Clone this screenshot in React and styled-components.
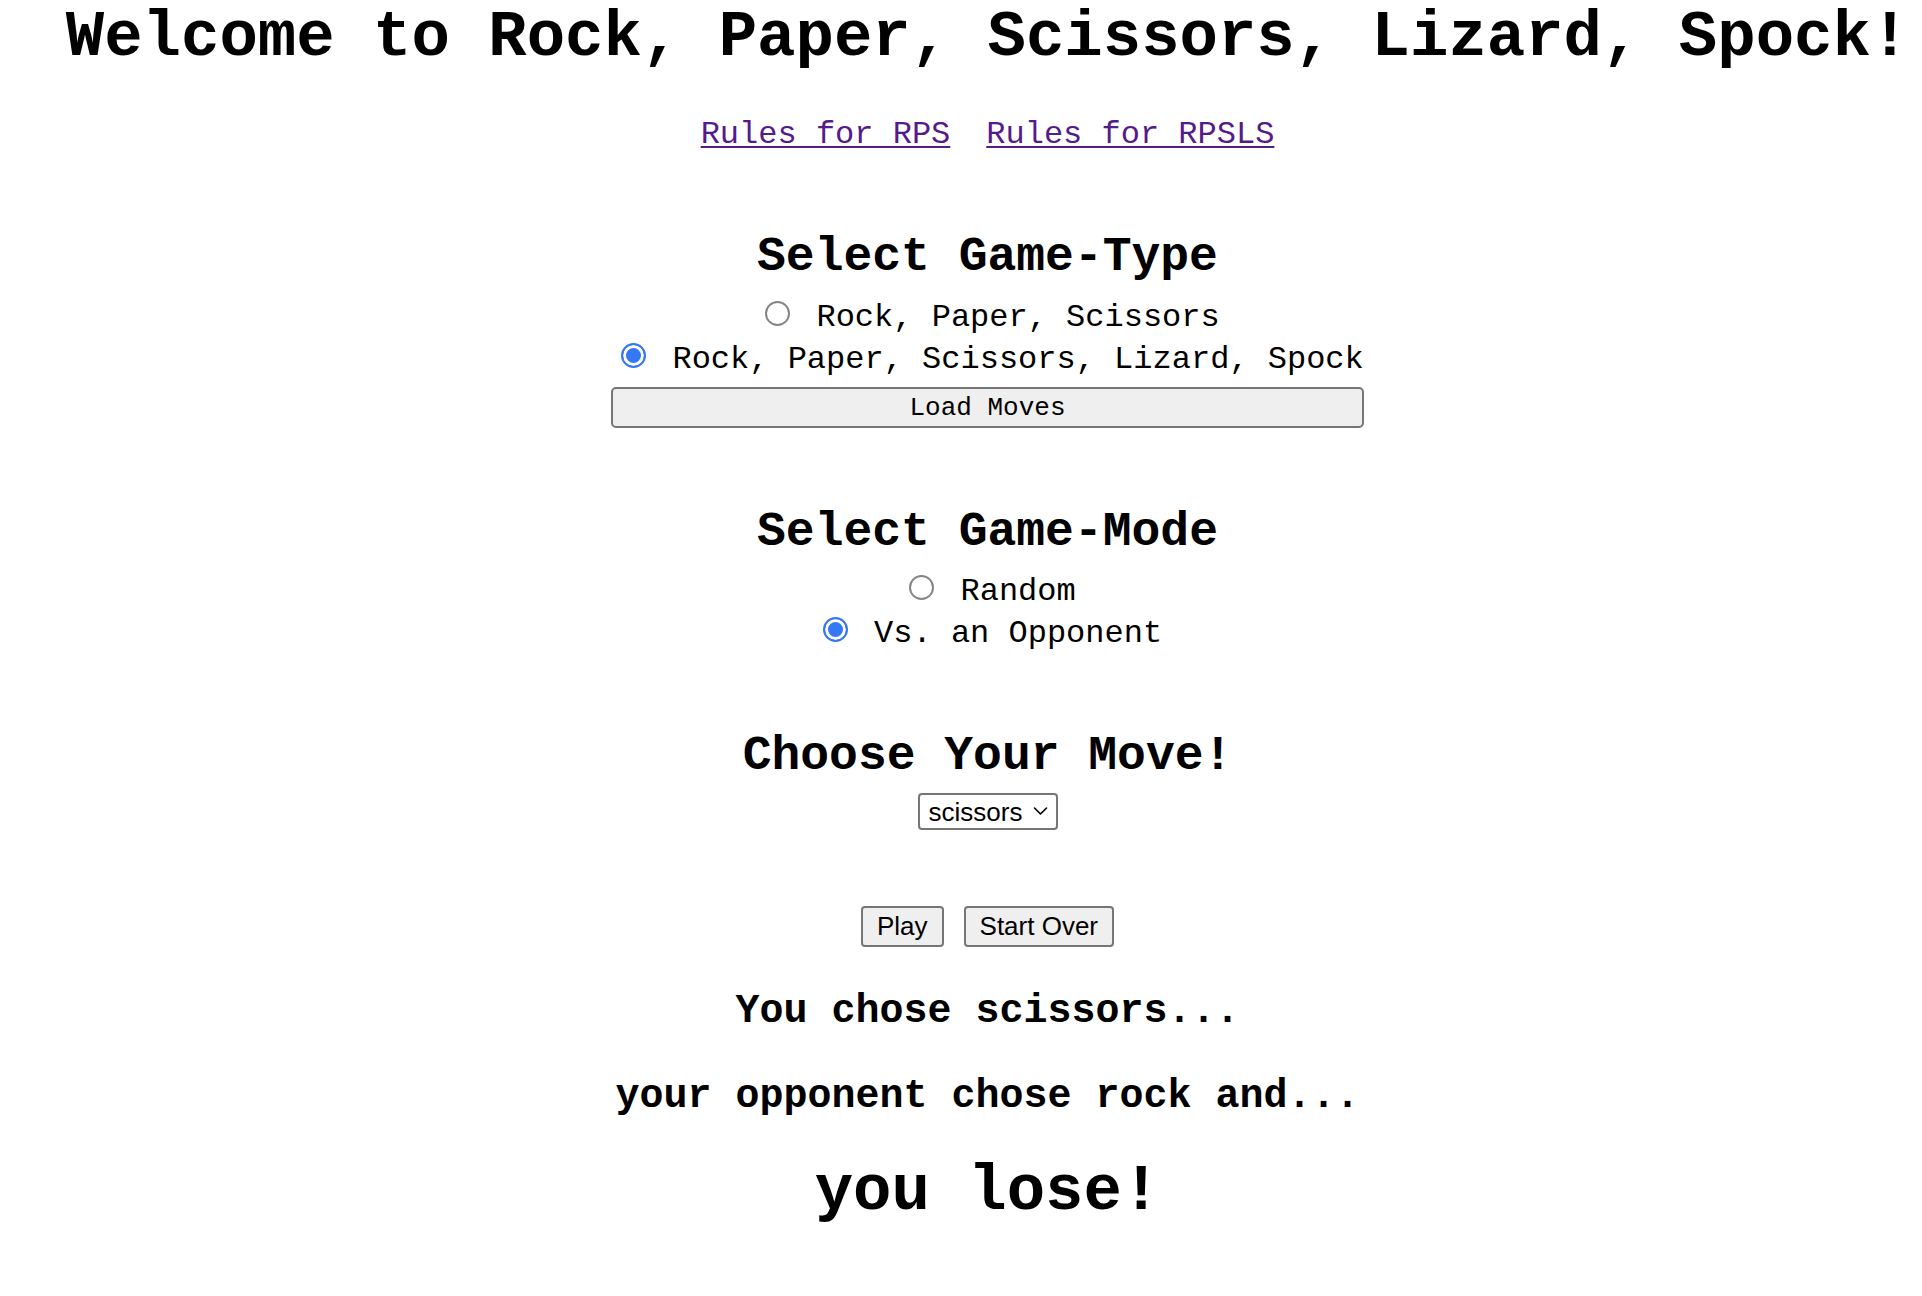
import React, { useState } from "react";
import styled, { createGlobalStyle } from "styled-components";

const GlobalStyle = createGlobalStyle`
  html, body {
    margin: 0;
    padding: 0;
    background: #ffffff;
  }
  body {
    font-family: "Liberation Mono", "Courier New", monospace;
    color: #000000;
  }
`;

const Page = styled.main`
  display: flex;
  flex-direction: column;
  align-items: center;
  padding: 6px 0 40px 53px;
  text-align: center;
  font-family: "Liberation Mono", "Courier New", monospace;
`;

const Title = styled.h1`
  margin: 0;
  font-size: 64px;
  line-height: 64px;
  font-weight: 700;
  white-space: nowrap;
`;

const LinkRow = styled.nav`
  display: flex;
  gap: 36px;
  margin-top: 45px;
  font-size: 32px;
  line-height: 40px;
`;

const RuleLink = styled.a`
  color: #551a8b;
  text-decoration: underline;
  text-decoration-thickness: 2px;
  text-underline-offset: 3px;
`;

const Section = styled.section`
  display: flex;
  flex-direction: column;
  align-items: center;
  margin-top: ${(p) => p.$mt}px;
`;

const SectionHeading = styled.h2`
  margin: 0;
  font-size: 48px;
  line-height: 56px;
  font-weight: 700;
`;

const RadioGroup = styled.div`
  display: flex;
  flex-direction: column;
  align-items: stretch;
  margin-top: ${(p) => p.$mt}px;
`;

const RadioRow = styled.label`
  display: block;
  font-size: 32px;
  line-height: 42px;
  white-space: pre;
  text-align: center;
  cursor: pointer;
`;

const Radio = styled.input.attrs({ type: "radio" })`
  appearance: none;
  -webkit-appearance: none;
  box-sizing: border-box;
  width: 25px;
  height: 25px;
  margin: 3px 7px 0 10px;
  border-radius: 50%;
  border: 2px solid #858585;
  background: #ffffff;
  vertical-align: baseline;
  cursor: pointer;

  &:checked {
    border: 2px solid #3478f6;
    background: #3478f6;
    box-shadow: inset 0 0 0 3px #ffffff;
  }
`;

const WideButton = styled.button`
  box-sizing: border-box;
  width: 100%;
  height: 41px;
  margin-top: 6px;
  padding: 0;
  font-family: "Liberation Mono", "Courier New", monospace;
  font-size: 26px;
  color: #000000;
  background: #efefef;
  border: 2px solid #767676;
  border-radius: 5px;
  cursor: pointer;
`;

const SelectWrap = styled.div`
  position: relative;
  margin-top: 9px;
`;

const MoveSelect = styled.select`
  appearance: none;
  -webkit-appearance: none;
  box-sizing: border-box;
  width: 140px;
  height: 37px;
  padding: 0 0 0 9px;
  font-family: "Liberation Sans", Arial, sans-serif;
  font-size: 26px;
  color: #000000;
  background: #ffffff;
  border: 2px solid #767676;
  border-radius: 4px;
`;

const Chevron = styled.svg`
  position: absolute;
  right: 10px;
  top: 13px;
  width: 15px;
  height: 10px;
  pointer-events: none;
`;

const ButtonRow = styled.div`
  display: flex;
  gap: 20px;
  margin-top: 76px;
`;

const PlainButton = styled.button`
  box-sizing: border-box;
  height: 41px;
  padding: 0 14px;
  font-family: "Liberation Sans", Arial, sans-serif;
  font-size: 26px;
  color: #000000;
  background: #efefef;
  border: 2px solid #767676;
  border-radius: 4px;
  cursor: pointer;
`;

const ResultLine = styled.h3`
  margin: ${(p) => p.$mt}px 0 0;
  font-size: 40px;
  line-height: 48px;
  font-weight: 700;
  white-space: pre;
`;

const Verdict = styled.h2`
  margin: 35px 0 0;
  font-size: 64px;
  line-height: 72px;
  font-weight: 700;
`;

export default function App() {
  const [gameType, setGameType] = useState("rpsls");
  const [mode, setMode] = useState("opponent");
  const [move, setMove] = useState("scissors");

  const moves = ["rock", "paper", "scissors", "lizard", "spock"];

  return (
    <>
      <GlobalStyle />
      <Page>
        <Title>Welcome to Rock, Paper, Scissors, Lizard, Spock!</Title>
        <LinkRow>
          <RuleLink href="#rps">Rules for RPS</RuleLink>
          <RuleLink href="#rpsls">Rules for RPSLS</RuleLink>
        </LinkRow>

        <Section $mt={74}>
          <SectionHeading>Select Game-Type</SectionHeading>
          <RadioGroup $mt={12}>
            <RadioRow>
              <Radio
                name="type"
                checked={gameType === "rps"}
                onChange={() => setGameType("rps")}
              />{" "}
              Rock, Paper, Scissors
            </RadioRow>
            <RadioRow>
              <Radio
                name="type"
                checked={gameType === "rpsls"}
                onChange={() => setGameType("rpsls")}
              />{" "}
              Rock, Paper, Scissors, Lizard, Spock
            </RadioRow>
            <WideButton>Load Moves</WideButton>
          </RadioGroup>
        </Section>

        <Section $mt={76}>
          <SectionHeading>Select Game-Mode</SectionHeading>
          <RadioGroup $mt={11}>
            <RadioRow>
              <Radio
                name="mode"
                checked={mode === "random"}
                onChange={() => setMode("random")}
              />{" "}
              Random
            </RadioRow>
            <RadioRow>
              <Radio
                name="mode"
                checked={mode === "opponent"}
                onChange={() => setMode("opponent")}
              />{" "}
              Vs. an Opponent
            </RadioRow>
          </RadioGroup>
        </Section>

        <Section $mt={73}>
          <SectionHeading>Choose Your Move!</SectionHeading>
          <SelectWrap>
            <MoveSelect value={move} onChange={(e) => setMove(e.target.value)}>
              {moves.map((m) => (
                <option key={m} value={m}>
                  {m}
                </option>
              ))}
            </MoveSelect>
            <Chevron viewBox="0 0 15 10">
              <path
                d="M1.5 2 L7.5 8 L13.5 2"
                fill="none"
                stroke="#000"
                strokeWidth="1.6"
                strokeLinecap="round"
                strokeLinejoin="round"
              />
            </Chevron>
          </SelectWrap>
        </Section>

        <ButtonRow>
          <PlainButton>Play</PlainButton>
          <PlainButton>Start Over</PlainButton>
        </ButtonRow>

        <ResultLine $mt={41}>You chose scissors...</ResultLine>
        <ResultLine $mt={37}>your opponent chose rock and...</ResultLine>
        <Verdict>you lose!</Verdict>
      </Page>
    </>
  );
}
